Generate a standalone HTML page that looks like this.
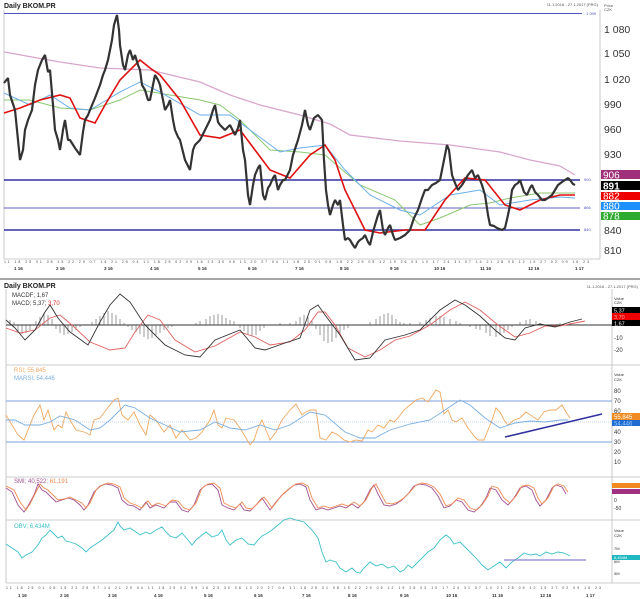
<!DOCTYPE html>
<html><head><meta charset="utf-8"><style>
html,body{margin:0;padding:0;background:#fff;}
svg{display:block;font-family:"Liberation Sans",sans-serif;}
</style></head><body>
<svg width="640" height="599" viewBox="0 0 640 599" xmlns="http://www.w3.org/2000/svg">
<rect width="640" height="599" fill="#fff"/>
<text x="4" y="8" font-size="7" font-weight="bold" fill="#222">Daily BKOM.PR</text>
<text x="598" y="6" font-size="4" fill="#555" text-anchor="end">11.1.2016 - 27.1.2017 (PRG)</text>
<line x1="0" y1="279" x2="640" y2="279" stroke="#888" stroke-width="1.5"/>
<text x="4" y="288" font-size="7" font-weight="bold" fill="#222">Daily BKOM.PR</text>
<text x="638" y="288" font-size="4" fill="#555" text-anchor="end">11.1.2016 - 27.1.2017 (PRG)</text>
<g stroke="#bbb" stroke-width="0.8" fill="none">
<line x1="600" y1="10" x2="600" y2="259"/>
<line x1="4" y1="10" x2="4" y2="259"/>
<line x1="612" y1="289" x2="612" y2="583"/>
<line x1="6" y1="289" x2="6" y2="583"/>
<line x1="6" y1="365" x2="640" y2="365"/>
<line x1="6" y1="477" x2="640" y2="477"/>
<line x1="6" y1="520" x2="640" y2="520"/>
<line x1="6" y1="583" x2="640" y2="583"/>
<line x1="4" y1="259" x2="600" y2="259"/>
</g>
<g font-size="10.5" fill="#333">
<text x="604" y="33">1 080</text><text x="604" y="57">1 050</text><text x="604" y="83">1 020</text>
<text x="604" y="108">990</text><text x="604" y="133">960</text><text x="604" y="158">930</text>
<text x="604" y="234">840</text><text x="604" y="254">810</text>
</g>
<text x="604" y="7" font-size="4" fill="#555">Price</text><text x="604" y="11" font-size="4" fill="#555">CZK</text>
<rect x="601" y="170" width="39" height="9" fill="#a0307a"/><text x="603" y="178.5" font-size="10" fill="#fff">906</text>
<rect x="601" y="181" width="39" height="9" fill="#000"/><text x="603" y="189.5" font-size="10" font-weight="bold" fill="#fff">891</text>
<rect x="601" y="192" width="39" height="8" fill="#e00"/><text x="603" y="199.5" font-size="10" fill="#fff">882</text>
<rect x="601" y="202" width="39" height="8" fill="#1e90ff"/><text x="603" y="209.5" font-size="10" fill="#fff">880</text>
<rect x="601" y="212" width="39" height="8" fill="#2eaa2e"/><text x="603" y="219.5" font-size="10" fill="#fff">878</text>
<line x1="4" y1="13.5" x2="582" y2="13.5" stroke="#5050c0" stroke-width="1"/>
<text x="586" y="15" font-size="4" fill="#5050c0">1 099</text>
<line x1="4" y1="180" x2="580" y2="180" stroke="#3030a0" stroke-width="1.5"/>
<text x="584" y="181" font-size="4" fill="#5050c0">900</text>
<line x1="4" y1="208" x2="580" y2="208" stroke="#6060c0" stroke-width="1"/>
<text x="584" y="209" font-size="4" fill="#5050c0">866</text>
<line x1="4" y1="230" x2="580" y2="230" stroke="#3030a0" stroke-width="1.5"/>
<text x="584" y="231" font-size="4" fill="#5050c0">840</text>
<polyline fill="none" stroke="#d8a6cc" stroke-width="1.3" points="4,52 60,62 100,68 150,70 200,82 230,95 260,105 300,115 330,124 350,135 400,141 450,145 500,152 530,160 560,166 575,175"/>
<polyline fill="none" stroke="#8cc870" stroke-width="1" points="4,100 30,100 60,108 90,110 120,100 140,90 170,95 200,100 220,105 240,120 270,150 300,152 325,155 360,185 395,200 420,225 440,218 470,205 490,203 510,198 540,193 575,193"/>
<polyline fill="none" stroke="#6aaee8" stroke-width="1" points="4,93 30,105 50,95 70,108 90,110 120,92 140,82 160,92 200,115 230,115 250,130 280,152 300,148 325,145 345,170 370,195 400,210 420,215 450,195 480,190 500,205 530,200 560,197 575,198"/>
<polyline fill="none" stroke="#e01010" stroke-width="1.6" points="4,113 20,108 40,100 60,95 70,98 80,118 95,123 105,105 120,80 140,60 150,68 160,75 180,100 200,135 220,138 240,130 255,150 270,170 290,178 310,155 325,145 335,160 345,190 365,230 380,233 405,230 425,230 445,200 465,178 485,180 505,205 520,210 540,200 560,195 575,195"/>
<polyline fill="none" stroke="#333" stroke-width="2.2" stroke-linejoin="bevel" points="4,83 8,78 10,95 15,110 18,140 20,160 23,150 25,130 28,120 32,110 35,85 38,70 42,60 45,55 48,72 50,70 53,105 55,130 58,140 60,150 63,130 65,120 68,140 70,140 75,148 80,155 83,132 85,120 88,115 90,110 95,98 100,85 103,75 105,70 108,60 112,40 114,25 117,15 119,30 120,45 123,65 125,70 128,55 130,50 133,60 135,55 138,65 140,70 142,85 145,90 148,100 150,100 153,85 155,75 158,80 160,85 163,100 165,110 168,105 170,100 173,120 175,130 178,137 180,140 185,160 190,170 193,150 195,145 198,142 200,140 205,130 210,120 213,110 215,105 218,122 220,125 225,130 230,125 235,135 238,128 240,120 243,150 245,160 248,195 250,205 253,185 255,175 258,168 260,165 263,195 265,200 268,188 270,185 273,178 275,175 278,190 280,185 283,180 285,180 290,170 293,155 298,140 302,125 305,110 308,125 310,130 314,118 318,115 322,120 324,160 326,190 328,205 330,215 333,205 335,200 338,205 340,200 343,225 345,240 348,238 350,240 353,245 355,248 358,242 360,240 363,238 365,235 368,242 370,245 373,232 375,225 378,215 380,210 383,230 385,235 388,228 390,225 393,235 395,240 400,238 405,235 410,230 414,218 418,210 422,198 425,190 428,190 432,185 436,183 440,180 444,160 447,145 449,150 452,175 455,183 458,190 462,185 465,180 468,175 472,170 475,178 478,175 482,185 485,195 488,215 490,225 494,226 497,228 502,230 505,228 508,215 510,205 512,190 515,185 518,183 520,180 524,192 527,195 530,188 532,185 535,192 538,195 542,200 545,200 548,198 552,195 555,190 558,185 562,182 565,180 568,178 570,180 573,184 575,185"/>
<g font-size="3.5" fill="#444">
<text x="4" y="263" textLength="585" lengthAdjust="spacing">11 18 25 01 08 15 22 29 07 14 21 29 04 11 18 25 02 09 16 23 30 06 13 20 27 04 11 18 25 01 08 15 22 29 05 12 19 26 03 10 17 24 31 07 14 21 28 05 12 19 27 02 09 16 23</text>
</g>
<g font-size="4.5" font-weight="bold" fill="#333">
<text x="14" y="270">1 16</text><text x="56" y="270">2 16</text><text x="104" y="270">3 16</text><text x="150" y="270">4 16</text><text x="198" y="270">5 16</text><text x="248" y="270">6 16</text><text x="295" y="270">7 16</text><text x="340" y="270">8 16</text><text x="390" y="270">9 16</text><text x="434" y="270">10 16</text><text x="480" y="270">11 16</text><text x="528" y="270">12 16</text><text x="575" y="270">1 17</text>
</g>
<line x1="6" y1="325" x2="612" y2="325" stroke="#333" stroke-width="1"/>
<path stroke="#555" stroke-width="0.6" d="M10,325v-5M14,325v-3M18,325v6M22,325v9M26,325v8M30,325v5M36,325v-4M40,325v-8M44,325v-12M48,325v-10M52,325v-6M56,325v4M60,325v8M64,325v10M68,325v9M72,325v7M76,325v5M80,325v2M92,325v-3M96,325v-6M100,325v-9M104,325v-12M108,325v-14M112,325v-12M116,325v-10M120,325v-6M124,325v-2M128,325v2M132,325v5M136,325v7M140,325v9M144,325v12M148,325v14M152,325v13M156,325v10M160,325v8M164,325v5M168,325v3M172,325v2M196,325v-2M200,325v-4M206,325v-6M210,325v-9M214,325v-10M218,325v-11M222,325v-10M226,325v-7M230,325v-5M234,325v-4M240,325v3M244,325v6M248,325v9M252,325v11M256,325v10M260,325v6M264,325v3M280,325v-2M290,325v-2M296,325v-4M300,325v-8M304,325v-10M308,325v-8M312,325v-4M316,325v4M320,325v10M324,325v16M328,325v18M332,325v17M336,325v13M340,325v9M344,325v5M348,325v3M370,325v-3M376,325v-6M380,325v-9M384,325v-11M388,325v-12M392,325v-10M396,325v-6M400,325v-3M404,325v-2M410,325v-2M420,325v-3M426,325v-5M430,325v-7M436,325v-9M440,325v-9M444,325v-8M450,325v-6M456,325v-4M460,325v-2M470,325v2M476,325v4M480,325v5M486,325v8M490,325v11M496,325v12M500,325v10M504,325v8M508,325v5M512,325v2M520,325v-3M526,325v-5M530,325v-6M536,325v-4M540,325v-2M560,325v-2M570,325v-2M578,325v-1"/>
<polyline fill="none" stroke="#e06060" stroke-width="0.9" points="6,328 20,333 35,330 50,318 60,315 72,325 90,342 110,350 125,348 135,332 148,315 160,320 175,340 195,352 215,346 240,332 255,337 270,345 290,342 305,330 318,312 325,312 335,325 348,348 365,357 380,350 395,340 410,336 430,325 450,310 465,302 480,310 498,325 515,337 530,333 545,326 560,326 575,323 585,321"/>
<polyline fill="none" stroke="#333" stroke-width="0.9" points="6,320 15,328 25,340 35,330 45,312 50,305 58,318 70,332 88,345 100,322 110,305 120,294 130,302 145,325 165,345 185,355 200,357 215,340 240,330 255,348 265,350 285,343 300,338 310,310 318,305 325,315 340,335 355,360 370,358 385,340 405,335 420,330 440,310 455,300 465,305 480,316 495,330 505,338 515,340 525,328 540,324 555,327 570,322 582,319"/>
<g font-size="6" fill="#333">
<text x="12" y="297" fill="#333">MACDF; 1,67</text><text x="12" y="305">MACD; 5,37; <tspan fill="#e03030">3,70</tspan></text>
<text x="614" y="300" font-size="4">Value</text><text x="614" y="304" font-size="4">CZK</text>
<text x="614" y="340">-10</text><text x="614" y="352">-20</text>
</g>
<rect x="612" y="307" width="28" height="6" fill="#000"/><text x="614" y="312.5" font-size="5.5" fill="#fff">5,37</text>
<rect x="612" y="313" width="28" height="7" fill="#e00"/><text x="614" y="319" font-size="5.5" fill="#faa">3,70</text>
<rect x="612" y="320" width="28" height="6" fill="#000"/><text x="614" y="325.5" font-size="5.5" fill="#fff">1,67</text>
<line x1="6" y1="401" x2="612" y2="401" stroke="#7aa0dc" stroke-width="1"/>
<line x1="6" y1="442" x2="612" y2="442" stroke="#7aa0dc" stroke-width="1"/>
<line x1="6" y1="422" x2="612" y2="422" stroke="#8ab0e0" stroke-width="0.6" stroke-dasharray="1,1"/>
<polyline fill="none" stroke="#f0a860" stroke-width="0.9" points="6,415 12,425 18,435 24,440 30,425 34,415 40,405 44,420 48,410 54,430 58,425 62,428 66,412 70,420 76,430 84,432 90,435 94,420 100,418 106,410 110,405 114,400 118,398 122,415 128,420 134,412 140,425 146,435 150,415 156,420 164,432 170,425 176,438 182,430 190,440 196,438 202,432 210,420 214,410 218,425 222,428 226,418 234,420 240,428 246,438 250,445 254,440 258,428 262,420 266,430 270,440 276,432 282,420 290,410 296,404 302,415 306,412 310,410 316,410 320,438 326,440 332,432 338,435 344,440 350,442 356,440 362,441 368,430 372,432 378,425 384,428 390,420 394,422 398,418 404,410 410,405 416,400 422,398 428,402 432,396 436,390 440,392 444,414 448,410 452,420 456,422 462,418 468,428 474,436 478,440 484,440 488,430 492,420 496,408 500,412 504,420 508,425 514,420 520,418 526,412 532,416 538,420 544,412 550,410 556,410 562,405 566,412 570,418"/>
<polyline fill="none" stroke="#7aaee0" stroke-width="0.9" points="6,420 15,420 25,425 40,425 50,422 60,416 75,420 90,430 100,428 110,420 125,405 135,408 150,418 165,425 180,432 200,430 215,422 230,428 245,430 260,425 275,430 290,425 310,412 325,415 345,432 360,438 375,438 390,430 410,424 430,420 445,410 460,400 470,405 485,418 500,428 515,423 530,421 545,422 560,420 568,420"/>
<line x1="505" y1="437" x2="602" y2="414" stroke="#3030a0" stroke-width="1.6"/>
<g font-size="6">
<text x="14" y="372" fill="#f0a860">RSI; 55,845</text><text x="14" y="380" fill="#7aaee0">MARSI; 54,446</text>
</g>
<g font-size="6" fill="#333">
<text x="614" y="376" font-size="4">Value</text><text x="614" y="381" font-size="4">CZK</text>
<text x="614" y="393">80</text><text x="614" y="403">70</text><text x="614" y="413">60</text><text x="614" y="434">40</text><text x="614" y="444">30</text><text x="614" y="454">20</text><text x="614" y="464">10</text>
</g>
<rect x="612" y="413" width="28" height="7" fill="#f08a20"/><text x="614" y="419" font-size="6" fill="#fff">55,845</text>
<rect x="612" y="420" width="28" height="6" fill="#1e6ad0"/><text x="614" y="425.5" font-size="6" fill="#9cf">54,446</text>
<polyline fill="none" stroke="#a05090" stroke-width="0.9" points="6,488 12,492 18,505 24,512 28,506 34,495 38,484 42,490 46,492 52,498 56,502 62,500 68,498 74,500 80,505 84,510 88,505 94,492 100,486 106,484 112,485 118,488 122,500 128,505 134,506 140,510 146,502 150,508 156,505 164,508 170,502 176,502 182,510 188,512 194,505 200,490 206,485 212,484 218,490 222,505 228,508 234,510 240,504 244,510 250,511 256,505 262,498 266,504 270,510 276,502 282,495 288,490 294,485 300,484 306,487 310,500 316,510 322,508 328,510 334,508 340,506 346,508 352,504 358,508 364,502 370,490 374,485 378,494 384,505 390,506 396,504 402,500 408,494 414,486 420,484 426,485 432,488 438,496 444,508 450,506 456,500 462,502 468,510 474,512 480,507 486,498 490,488 496,490 502,500 508,505 514,498 520,488 526,486 532,490 536,500 540,506 546,500 552,488 556,485 562,487 566,494"/>
<polyline fill="none" stroke="#f08a50" stroke-width="0.9" points="6,486 14,490 20,502 26,510 30,504 36,492 40,484 44,488 48,490 54,496 58,500 64,499 70,497 76,500 82,503 86,508 90,503 96,490 102,485 108,483 114,484 120,487 124,498 130,503 136,505 142,508 148,501 152,506 158,503 166,506 172,500 178,501 184,508 190,510 196,503 202,488 208,484 214,483 220,488 224,503 230,506 236,508 242,502 246,508 252,509 258,503 264,497 268,502 272,508 278,500 284,493 290,488 296,484 302,483 308,486 312,498 318,508 324,506 330,508 336,506 342,504 348,506 354,502 360,506 366,500 372,488 376,484 380,492 386,503 392,504 398,502 404,498 410,492 416,485 422,483 428,484 434,487 440,494 446,506 452,504 458,498 464,500 470,508 476,510 482,505 488,496 492,486 498,488 504,498 510,503 516,496 522,486 528,485 534,488 538,498 542,504 548,498 554,486 558,484 564,486 568,492"/>
<text x="14" y="483" font-size="6" fill="#a05090">SMI; 40,522; <tspan fill="#f08a50">61,191</tspan></text>
<rect x="612" y="483" width="28" height="5" fill="#f08a20"/>
<rect x="612" y="489" width="28" height="5" fill="#a03080"/>
<g font-size="5" fill="#333"><text x="614" y="502">0</text><text x="614" y="510">-50</text></g>
<polyline fill="none" stroke="#3cc0c8" stroke-width="0.9" points="6,544 12,548 18,552 22,558 26,555 32,552 38,545 42,538 46,535 50,530 54,534 58,538 62,536 66,541 70,542 76,544 82,548 86,552 90,548 96,544 102,540 108,535 114,530 118,522 120,526 124,530 130,528 136,532 140,535 146,532 150,534 156,530 162,527 166,532 170,536 176,538 182,533 188,540 192,545 196,540 202,535 206,532 212,537 218,535 222,530 226,540 230,545 236,540 242,538 248,544 254,545 258,540 262,536 266,534 272,530 278,525 284,520 290,518 296,520 304,522 312,530 318,538 322,552 326,562 330,560 336,562 340,568 346,572 352,568 356,572 360,573 364,568 370,562 376,566 382,564 388,568 394,566 400,572 404,570 408,565 412,568 418,562 422,558 428,552 434,548 440,540 446,535 450,538 454,544 460,542 466,548 470,552 476,558 482,565 488,570 494,566 500,562 506,568 512,562 518,558 524,553 530,555 536,554 540,556 546,552 552,554 558,552 564,553 570,556"/>
<line x1="504" y1="560" x2="586" y2="560" stroke="#8a80d0" stroke-width="1.2"/>
<text x="14" y="528" font-size="6" fill="#3cc0c8">OBV; 6,434M</text>
<g font-size="4" fill="#333"><text x="614" y="532">Value</text><text x="614" y="537">CZK</text><text x="614" y="550">7M</text><text x="614" y="563">6M</text><text x="614" y="575">5M</text></g>
<rect x="612" y="555" width="28" height="5" fill="#20b8c0"/><text x="614" y="559" font-size="4" fill="#fff">6,434M</text>
<g font-size="3.5" fill="#444">
<text x="6" y="589" textLength="595" lengthAdjust="spacing">11 18 25 01 08 15 22 29 07 14 21 29 04 11 18 25 02 09 16 23 30 06 13 20 27 04 11 18 25 01 08 15 22 29 05 12 19 26 03 10 17 24 31 07 14 21 28 05 12 19 27 02 09 16 23</text>
</g>
<g font-size="4.5" font-weight="bold" fill="#333">
<text x="18" y="597">1 16</text><text x="60" y="597">2 16</text><text x="108" y="597">3 16</text><text x="154" y="597">4 16</text><text x="204" y="597">5 16</text><text x="254" y="597">6 16</text><text x="302" y="597">7 16</text><text x="348" y="597">8 16</text><text x="400" y="597">9 16</text><text x="446" y="597">10 16</text><text x="492" y="597">11 16</text><text x="540" y="597">12 16</text><text x="586" y="597">1 17</text>
</g>
</svg>
</body></html>
